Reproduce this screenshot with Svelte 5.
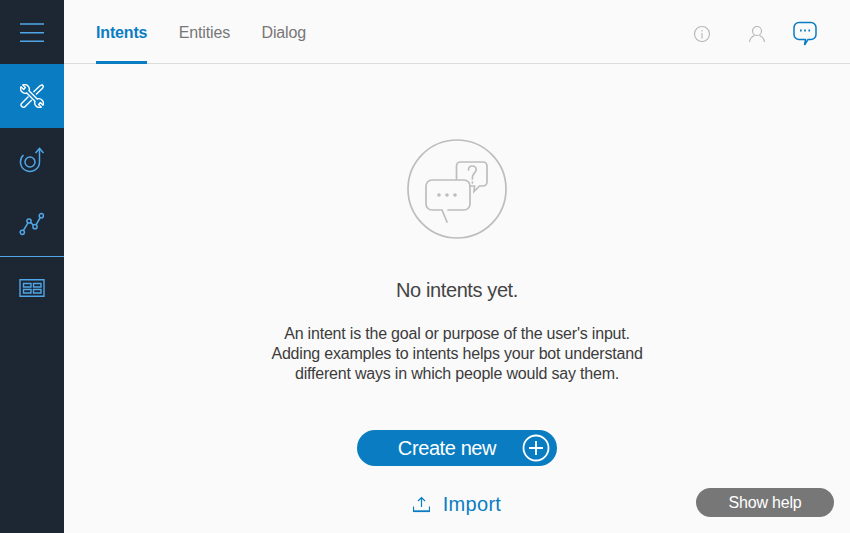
<script>
  const tabs = [
    { label: 'Intents', active: true },
    { label: 'Entities' },
    { label: 'Dialog' }
  ];
</script>

<div class="app">
  <nav class="sidebar">
    <button class="nav-item" aria-label="Menu">
      <svg width="26" height="20" viewBox="0 0 26 20" fill="none" stroke="#4fa6e8" stroke-width="1.500">
        <path d="M1 2h24M1 10.700h24M1 19.300h24" />
      </svg>
    </button>
    <button class="nav-item active" aria-label="Build">
      <svg width="24" height="24" viewBox="0 0 24 24" fill="none" stroke="#fff" stroke-width="1.400" stroke-linejoin="round">
        <path d="M1 2.800 3.600 5.400 5.400 3.600 2.800 1A4.600 4.600 0 0 1 9 6.800L17.200 15A4.600 4.600 0 0 1 23 21.200L20.400 18.600 18.600 20.400 21.200 23A4.600 4.600 0 0 1 15 17.200L6.800 9A4.600 4.600 0 0 1 1 2.800Z" />
        <path d="M13.500 8 20 1.800l2-1 1.500 1.500-1 2L16 10.500" />
        <path d="M8.500 12.500 1.800 19.200a2.400 2.400 0 0 0 3.400 3.400L11.800 16" />
      </svg>
    </button>
    <button class="nav-item" aria-label="Improve">
      <svg width="26" height="26" viewBox="0 0 26 26" fill="none" stroke="#4fa6e8" stroke-width="1.500">
        <circle cx="11" cy="15" r="5" />
        <path d="M4.500 8A9.500 9.500 0 1 0 20.500 15V1.500" />
        <path d="M16.500 6 20.500 1.500 24.500 6" />
      </svg>
    </button>
    <button class="nav-item rule" aria-label="Analytics">
      <svg width="26" height="26" viewBox="0 0 26 26" fill="none" stroke="#4fa6e8" stroke-width="1.500">
        <circle cx="3.300" cy="21.300" r="2.100" />
        <circle cx="10" cy="10" r="2.100" />
        <circle cx="16" cy="15.700" r="2.100" />
        <circle cx="22.300" cy="4.700" r="2.100" />
        <path d="M4.400 19.500 9 11.800M11.500 11.400l3 2.900M17 13.900l4.300-7.400" />
      </svg>
    </button>
    <button class="nav-item" aria-label="Content">
      <svg class="grid-icon" width="26" height="18" viewBox="0 0 26 18" fill="none" stroke="#4fa6e8" stroke-width="1.400">
        <path d="M1 .700h24v16.500H1z" />
        <path d="M4.500 4.500h7.500v3.500H4.500zM14.500 4.500H22v3.500h-7.500zM4.500 10.500h7.500V14H4.500zM14.500 10.500H22V14h-7.500z" />
      </svg>
    </button>
  </nav>

  <div class="main">
    <header class="topbar">
      <div class="tabs">
        {#each tabs as tab}
          <span class="tab" class:active={tab.active}>{tab.label}</span>
        {/each}
      </div>
      <div class="top-icons">
        <svg width="18" height="18" viewBox="0 0 18 18" fill="none" stroke="#b5b5b5" stroke-width="1.100">
          <circle cx="9" cy="9" r="7.500" />
          <path d="M9 8v5.500M9 5v1.500" />
        </svg>
        <svg width="18" height="18" viewBox="0 0 18 18" fill="none" stroke="#b5b5b5" stroke-width="1.100">
          <circle cx="9" cy="6" r="4.500" />
          <path d="M1.500 17c.5-3.500 2.500-5.500 5-6.500M16.500 17c-.5-3.500-2.500-5.500-5-6.500" />
        </svg>
        <svg class="chat" width="24" height="25" viewBox="0 0 24 25" fill="none" stroke="#0a7dc2" stroke-width="1.500">
          <path d="M6 1.500h12a5 5 0 0 1 5 5v7a5 5 0 0 1-5 5h-3L11.500 24l1-5.500H6a5 5 0 0 1-5-5v-7a5 5 0 0 1 5-5Z" />
          <path d="M7 9.500h1.700M11.200 9.500h1.700M15.400 9.500h1.700" stroke-width="1.800" />
        </svg>
      </div>
    </header>

    <section class="empty">
      <svg class="hero" width="100" height="100" viewBox="0 0 100 100" fill="none" stroke="#bdbdbd" stroke-width="1.700" stroke-linecap="round">
        <circle cx="50" cy="50" r="49" />
        <path d="M49.500 40V27a4 4 0 0 1 4-4H76a4 4 0 0 1 4 4v16a4 4 0 0 1-4 4h-3.500L67 52.500 67.500 47H63" />
        <path d="M35 71H25a6 6 0 0 1-6-6V47a6 6 0 0 1 6-6h32a6 6 0 0 1 6 6v18a6 6 0 0 1-6 6H41M35 71l5 12" />
        <path d="M61.500 31c0-2.500 1.500-4 3.700-4 2.300 0 4 1.500 4 3.700 0 3-3.800 3.500-3.800 7.800v1.500M65.400 43v1" />
        <circle cx="32" cy="56" r="1.800" fill="#bdbdbd" stroke="none" />
        <circle cx="40" cy="56" r="1.800" fill="#bdbdbd" stroke="none" />
        <circle cx="48" cy="56" r="1.800" fill="#bdbdbd" stroke="none" />
      </svg>

      <h1>No intents yet.</h1>
      <p>
        An intent is the goal or purpose of the user's input.<br />
        Adding examples to intents helps your bot understand<br />
        different ways in which people would say them.
      </p>

      <button class="create">
        <span>Create new</span>
        <svg width="28" height="28" viewBox="0 0 28 28" fill="none" stroke="#fff" stroke-width="1.800">
          <circle cx="14" cy="14" r="12.500" />
          <path d="M14 7v14M7 14h14" />
        </svg>
      </button>

      <button class="import">
        <svg width="17" height="17" viewBox="0 0 17 17" fill="none" stroke="#0a7dc2" stroke-width="1.200">
          <path d="M8.500 11V1.500M5 5l3.500-3.500L12 5" />
          <path d="M.5 10.500v5h16v-5" />
          <path d="M.5 15.200h16" stroke-width="1.800" />
        </svg>
        <span>Import</span>
      </button>
    </section>

    <button class="help">Show help</button>
  </div>
</div>

<style>
  :global(body) {
    font-family: "Liberation Sans", Arial, sans-serif;
    background: #fafafa;
  }

  button {
    border: none;
    padding: 0;
    background: none;
    font: inherit;
  }

  .app {
    display: flex;
    height: 533px;
    overflow: hidden;
  }

  .sidebar {
    width: 64px;
    flex: none;
    background: #1c2733;
    display: flex;
    flex-direction: column;
  }

  .nav-item {
    height: 64px;
    display: flex;
    align-items: center;
    justify-content: center;
  }

  .nav-item.active {
    background: #0a7dc2;
  }

  .nav-item.rule {
    border-bottom: 1px solid #4fa6e8;
    height: 65px;
  }

  .grid-icon {
    margin-top: -3px;
  }

  .main {
    flex: 1;
    position: relative;
    min-width: 0;
  }

  .topbar {
    height: 63px;
    border-bottom: 1px solid #dcdcdc;
    display: flex;
    justify-content: space-between;
    align-items: stretch;
    padding: 0 33px 0 32px;
  }

  .tabs {
    display: flex;
    gap: 31.5px;
  }

  .tab {
    font-size: 16px;
    letter-spacing: -0.16px;
    color: #777;
    line-height: 65px;
    height: 64px;
    box-sizing: border-box;
  }

  .tab.active {
    color: #0a7dc2;
    font-weight: 700;
    border-bottom: 3px solid #0a7dc2;
  }

  .top-icons {
    display: flex;
    align-items: flex-start;
    padding-top: 25px;
  }

  .top-icons svg:nth-child(2) {
    margin-left: 37px;
  }

  .chat {
    margin-top: -4px;
    margin-left: 27px;
  }

  .empty {
    display: flex;
    flex-direction: column;
    align-items: center;
    padding-top: 75px;
  }

  .hero {
    display: block;
  }

  h1 {
    margin: 38px 0 0;
    font-size: 20px;
    letter-spacing: -0.4px;
    line-height: 26px;
    font-weight: 400;
    color: #444;
  }

  p {
    margin: 21px 0 0;
    font-size: 16px;
    letter-spacing: -0.2px;
    line-height: 20px;
    color: #3c3c3c;
    text-align: center;
  }

  .create {
    margin-top: 46px;
    width: 200px;
    height: 36px;
    border-radius: 18px;
    background: #0a7dc2;
    color: #fff;
    font-size: 20px;
    letter-spacing: -0.4px;
    position: relative;
    display: flex;
    align-items: center;
    justify-content: center;
    padding-right: 20px;
    padding-top: 1px;
    box-sizing: border-box;
  }

  .create svg {
    position: absolute;
    right: 7px;
    top: 4px;
  }

  .import {
    margin-top: 15px;
    display: flex;
    align-items: center;
    gap: 13px;
    color: #0a7dc2;
    font-size: 20px;
    letter-spacing: 0.3px;
    height: 46px;
  }

  .help {
    position: absolute;
    right: 16px;
    bottom: 16px;
    width: 138px;
    height: 29px;
    border-radius: 15px;
    background: #777;
    color: #fff;
    font-size: 16px;
    letter-spacing: -0.2px;
  }
</style>
